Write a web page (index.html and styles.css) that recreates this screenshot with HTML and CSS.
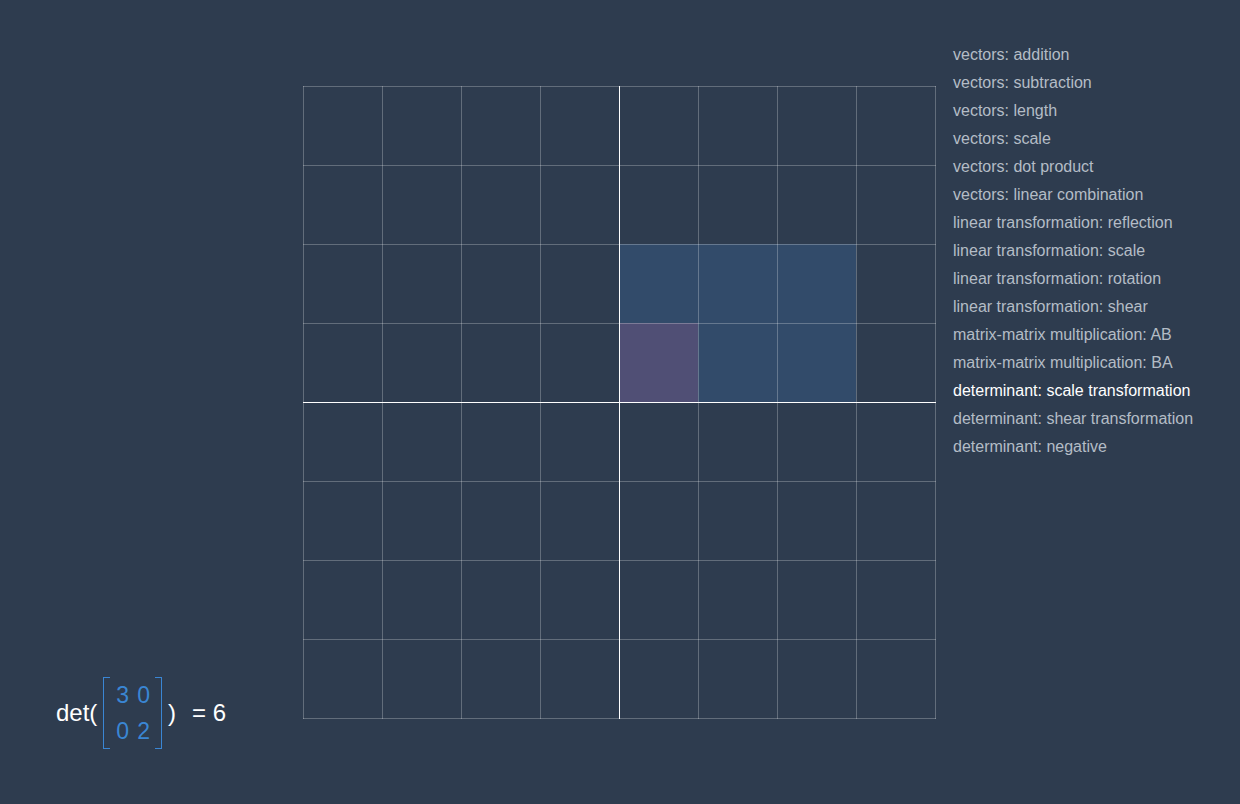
FILE: index.html
```html
<!DOCTYPE html>
<html>
<head>
<meta charset="utf-8">
<link rel="stylesheet" href="styles.css">
</head>
<body>
<div class="app">
  <div class="left">
    <div class="det">
      <span class="det-label">det(</span>
      <span class="matrix">
        <span class="bracket bl"></span>
        <span class="cells">
          <span>3</span><span>0</span>
          <span>0</span><span>2</span>
        </span>
        <span class="bracket br"></span>
      </span>
      <span class="close">)</span>
      <span class="eq">= 6</span>
    </div>
  </div>
  <div class="plot">
    <svg width="633" height="633" viewBox="0 0 633 633">
      <rect x="316" y="158" width="237" height="158" fill="#3a6fa8" fill-opacity="0.3"/>
      <rect x="316" y="237" width="79" height="79" fill="#8a5a8a" fill-opacity="0.35"/>
      <g stroke="#ffffff" stroke-opacity="0.25" stroke-width="1">
        <line x1="0.5" y1="0" x2="0.5" y2="633"/>
        <line x1="79.5" y1="0" x2="79.5" y2="633"/>
        <line x1="158.5" y1="0" x2="158.5" y2="633"/>
        <line x1="237.5" y1="0" x2="237.5" y2="633"/>
        <line x1="395.5" y1="0" x2="395.5" y2="633"/>
        <line x1="474.5" y1="0" x2="474.5" y2="633"/>
        <line x1="553.5" y1="0" x2="553.5" y2="633"/>
        <line x1="632.5" y1="0" x2="632.5" y2="633"/>
        <line y1="0.5" x1="0" y2="0.5" x2="633"/>
        <line y1="79.5" x1="0" y2="79.5" x2="633"/>
        <line y1="158.5" x1="0" y2="158.5" x2="633"/>
        <line y1="237.5" x1="0" y2="237.5" x2="633"/>
        <line y1="395.5" x1="0" y2="395.5" x2="633"/>
        <line y1="474.5" x1="0" y2="474.5" x2="633"/>
        <line y1="553.5" x1="0" y2="553.5" x2="633"/>
        <line y1="632.5" x1="0" y2="632.5" x2="633"/>
      </g>
      <g stroke="#ffffff" stroke-width="1">
        <line x1="316.5" y1="0" x2="316.5" y2="633"/>
        <line y1="316.5" x1="0" y2="316.5" x2="633"/>
      </g>
    </svg>
  </div>
  <ul class="menu">
    <li>vectors: addition</li>
    <li>vectors: subtraction</li>
    <li>vectors: length</li>
    <li>vectors: scale</li>
    <li>vectors: dot product</li>
    <li>vectors: linear combination</li>
    <li>linear transformation: reflection</li>
    <li>linear transformation: scale</li>
    <li>linear transformation: rotation</li>
    <li>linear transformation: shear</li>
    <li>matrix-matrix multiplication: AB</li>
    <li>matrix-matrix multiplication: BA</li>
    <li class="active">determinant: scale transformation</li>
    <li>determinant: shear transformation</li>
    <li>determinant: negative</li>
  </ul>
</div>
</body>
</html>
```

FILE: styles.css
```css
html, body {
  margin: 0;
  padding: 0;
  background: #2e3c4f;
  font-family: "Liberation Sans", Arial, sans-serif;
  color: #ffffff;
}

.app {
  display: flex;
  align-items: flex-start;
  height: 804px;
  overflow: hidden;
}

.left {
  width: 303px;
  height: 804px;
  box-sizing: border-box;
  display: flex;
  flex-direction: column;
  justify-content: flex-end;
  padding: 0 0 55px 56px;
}

.det {
  display: flex;
  align-items: center;
  font-size: 24px;
  color: #ffffff;
}

.det-label {
  line-height: 28px;
}

.matrix {
  display: flex;
  align-items: stretch;
  height: 72px;
  margin-left: 6px;
}

.bracket {
  width: 6px;
  border: 1px solid #3a86d4;
}

.bl { border-right: none; }
.br { border-left: none; }

.cells {
  display: grid;
  grid-template-columns: auto auto;
  grid-auto-rows: 36px;
  column-gap: 8px;
  padding: 0 5px 0 6px;
  align-items: center;
  font-size: 23px;
  color: #3a86d4;
}

.close {
  margin-left: 6px;
}

.eq {
  margin-left: 16px;
}

.plot {
  margin-top: 86px;
  width: 633px;
  height: 633px;
}

.plot svg {
  display: block;
}

.menu {
  list-style: none;
  margin: 41px 0 0 17px;
  padding: 0;
  font-size: 16px;
  line-height: 28px;
  color: #b4bcc6;
}

.menu li {
  white-space: nowrap;
  cursor: pointer;
}

.menu li.active {
  color: #ffffff;
}
```
